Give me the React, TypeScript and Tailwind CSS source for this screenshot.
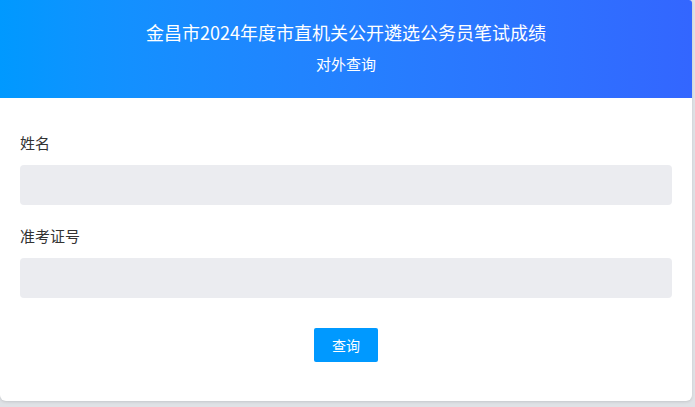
export default function App() {
  return (
    <div
      className="w-[695px] h-[407px] bg-[#dfe2e6] overflow-hidden"
      style={{ fontFamily: '"Microsoft YaHei", "Noto Sans CJK SC", "Liberation Sans", sans-serif' }}
    >
      <div className="w-[692px] h-[401px] bg-white rounded-b-[6px] rounded-tr-[3px] overflow-hidden shadow-[0_1px_3px_rgba(0,0,0,0.12)]">
        {/* Header */}
        <div className="h-[98px] bg-gradient-to-r from-[#0099ff] to-[#3366ff] flex flex-col items-center pt-[18px] text-white">
          <h1 className="text-[18px] leading-[28px]">金昌市2024年度市直机关公开遴选公务员笔试成绩</h1>
          <p className="text-[15px] leading-[22px] mt-[7px]">对外查询</p>
        </div>

        {/* Form */}
        <div className="px-5 pt-[34px]">
          <label className="block text-[15px] leading-[22px] text-[#333]">姓名</label>
          <input className="mt-[11px] block w-full h-[40px] bg-[#ebecf0] rounded-[4px] outline-none px-3" />

          <label className="block mt-[20px] text-[15px] leading-[22px] text-[#333]">准考证号</label>
          <input className="mt-[11px] block w-full h-[40px] bg-[#ebecf0] rounded-[4px] outline-none px-3" />

          <div className="flex justify-center mt-[30px]">
            <button className="w-[64px] h-[34px] bg-[#0099ff] text-white text-[14px] rounded-[2px]">查询</button>
          </div>
        </div>
      </div>
    </div>
  );
}
